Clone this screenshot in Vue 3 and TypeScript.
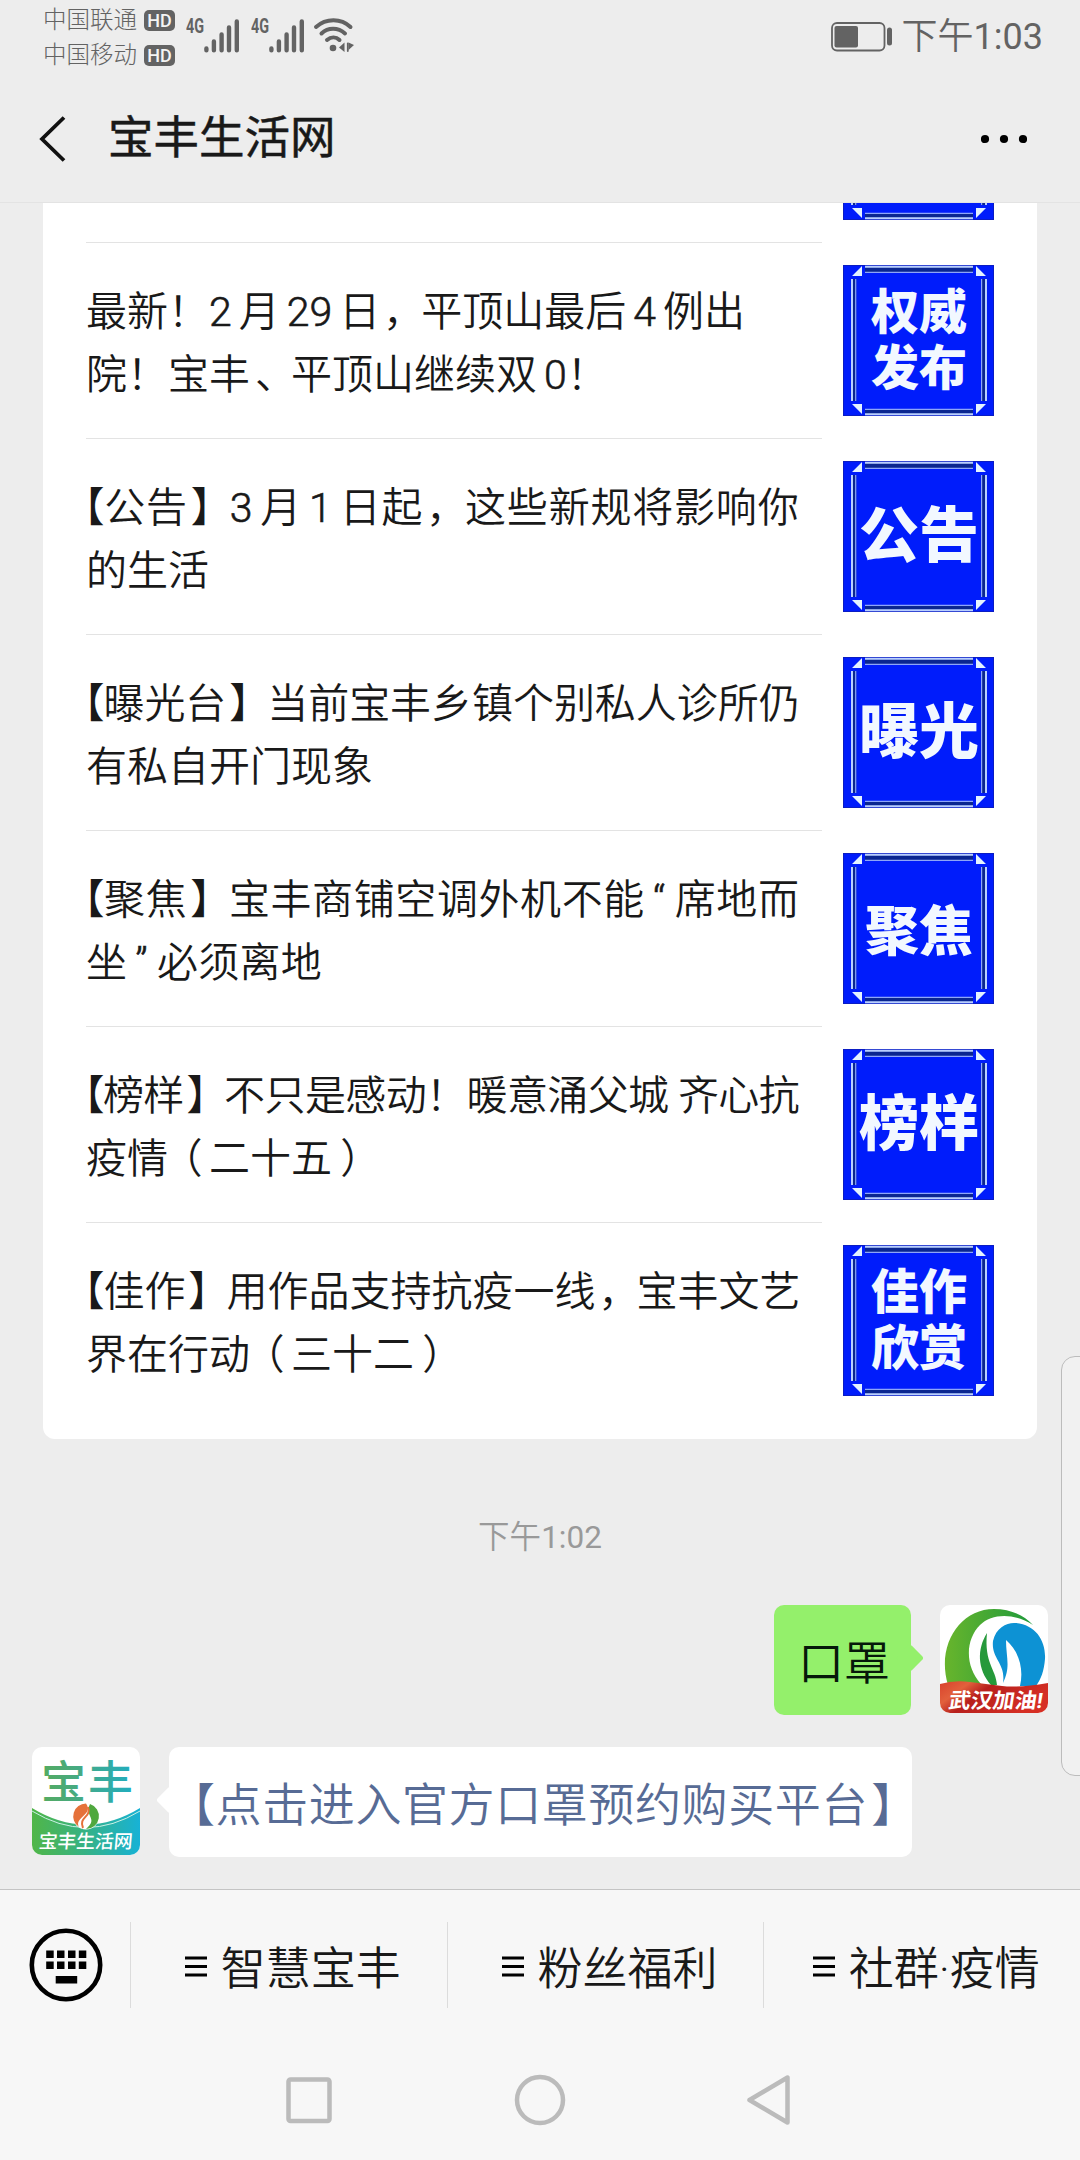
<script setup lang="ts">
interface Line { text: string; spacing: number }
interface Article { lines: Line[]; badge: string[]; size: number }
interface Token { text: string; kind: string }

const line = (text: string, spacing = 0): Line => ({ text, spacing })

const articles: Article[] = [
  { lines: [], badge: [], size: 60 },
  { lines: [line('最新！2月29日，平顶山最后4例出'), line('院！宝丰、平顶山继续双0！')], badge: ['权威', '发布'], size: 48 },
  { lines: [line('【公告】3月1日起，这些新规将影响你', 0.8), line('的生活')], badge: ['公告'], size: 60 },
  { lines: [line('【曝光台】当前宝丰乡镇个别私人诊所仍', -0.05), line('有私自开门现象')], badge: ['曝光'], size: 60 },
  { lines: [line('【聚焦】宝丰商铺空调外机不能“席地而', 0.6), line('坐”必须离地', 0.3)], badge: ['聚焦'], size: 54 },
  { lines: [line('【榜样】不只是感动！暖意涌父城 齐心抗', -0.6), line('疫情（二十五）')], badge: ['榜样'], size: 60 },
  { lines: [line('【佳作】用作品支持抗疫一线，宝丰文艺'), line('界在行动（三十二）')], badge: ['佳作', '欣赏'], size: 48 },
]

const kinds: Record<string, string> = {
  '【': 'half lb', '】': 'half rb', '（': 'half lp', '）': 'half rp', '，': 'half comma', '、': 'half pause', '“': 'latin quote', '”': 'latin quote',
}

/* Splits a title so that digits and wide punctuation get their own spacing. */
function tokens(text: string): Token[] {
  const parts = text.split(/([0-9]+|[“”【】（），、])/).filter(Boolean)
  return parts.map((p, i) => {
    if (!/^[0-9]/.test(p)) return { text: p, kind: kinds[p] ?? '' }
    const before = i > 0 ? parts[i - 1].slice(-1) : ''
    const after = i < parts.length - 1 ? parts[i + 1][0] : ''
    const wide = /[！】，、]/
    return {
      text: p,
      kind: ['latin', wide.test(before) ? '' : 'gl', wide.test(after) ? '' : 'gr'].join(' '),
    }
  })
}

const menus = ['智慧宝丰', '粉丝福利', '社群·疫情']
</script>

<template>
  <div class="screen">
    <div class="status">
      <div class="carriers">
        <div v-for="c in ['中国联通', '中国移动']" :key="c" class="carrier">
          <span>{{ c }}</span><b class="hd">HD</b>
        </div>
      </div>
      <div v-for="n in 2" :key="n" class="signal">
        <span class="g4">4G</span>
        <svg width="36" height="34" viewBox="0 0 36 34" stroke="#636363" stroke-width="4.4" stroke-linecap="round">
          <path d="M2.4 29.4V31.2M9.9 22.4V31.2M17.6 15.4V31.2M25 8.4V31.2M32.8 2.4V31.2" />
        </svg>
      </div>
      <svg class="wifi" width="42" height="36" viewBox="0 0 42 36" fill="none" stroke="#636363" stroke-width="4" stroke-linecap="round">
        <path d="M3 10C13 1 28 1 37.500 10M8.500 16.500C15 10.300 25 10.300 32 16.500M14 23C18 19.500 23 19.500 26.500 23" />
        <circle cx="20" cy="31" r="3.300" fill="#636363" stroke="none" />
        <path d="M31.500 25.500V35L26 30.500ZM35.500 25.500L41 28L35.500 33Z" fill="#636363" stroke="none" />
        <path d="M34.800 26.500V34" stroke-width="1.800" />
      </svg>
      <div class="clock">
        <svg width="62" height="30" viewBox="0 0 62 30">
          <rect x="1" y="1" width="52.500" height="27.500" rx="5" fill="none" stroke="#636363" stroke-width="1.800" />
          <rect x="3.500" y="4" width="23.500" height="21.500" rx="2" fill="#636363" />
          <rect x="56" y="5.500" width="5" height="18" rx="2.500" fill="#636363" />
        </svg>
        <span>下午<span class="num">1:03</span></span>
      </div>
    </div>

    <header class="head">
      <svg width="28" height="46" viewBox="0 0 28 46" fill="none" stroke="#111" stroke-width="3.800">
        <path d="M25 1.500L3 23L25 44.500" />
      </svg>
      <h1>宝丰生活网</h1>
      <svg class="more" width="46" height="10" viewBox="0 0 46 10">
        <circle cx="4" cy="5" r="4.100" /><circle cx="23" cy="5" r="4.100" /><circle cx="42" cy="5" r="4.100" />
      </svg>
    </header>

    <main class="feed">
      <section class="card">
        <article v-for="(a, i) in articles" :key="i" class="item">
          <div class="title">
            <div v-for="l in a.lines" :key="l.text" class="line" :style="{ letterSpacing: l.spacing + 'px' }">
              <span v-for="(t, k) in tokens(l.text)" :key="k" :class="t.kind">{{ t.text }}</span>
            </div>
          </div>
          <svg class="thumb" width="151" height="151" viewBox="0 0 151 151">
            <rect width="151" height="151" fill="#0a1cc4" />
            <rect x="1" y="1" width="149" height="149" fill="#001cfb" />
            <path d="M22 4.500H130M22 146.500H130M10.800 14V136M140.800 14V136" stroke="#0a2690" stroke-width="5" />
            <path d="M22 1.700H130M22 149.300H130M9 14V136M143 14V136" stroke="#b9cfff" stroke-width="2" />
            <path d="M22 7.300H130M22 144.300H130M12.700 14V136M138.600 14V136" stroke="#8ea6f8" stroke-width="1.200" />
            <path d="M9 11L19 1V11ZM133 1V11H143ZM9 139H19V149ZM133 139H143L133 149Z" fill="#e4f3ff" />
            <g class="badge" text-anchor="middle" fill="#f2f8ff" :font-size="a.size">
              <template v-if="a.badge.length === 2">
                <text x="76" y="63.500">{{ a.badge[0] }}</text>
                <text x="76" y="120">{{ a.badge[1] }}</text>
              </template>
              <text v-else-if="a.badge.length" x="76" :y="a.size === 54 ? 98 : 96">{{ a.badge[0] }}</text>
            </g>
          </svg>
        </article>
      </section>

      <p class="time">下午<span class="num">1:02</span></p>

      <div class="msg mine">
        <div class="bubble">口罩</div>
        <svg class="avatar" width="108" height="108" viewBox="0 0 108 108">
          <defs>
            <linearGradient id="leaf" x1="0" x2="1"><stop offset="0" stop-color="#68b52c" /><stop offset="1" stop-color="#1f9a3c" /></linearGradient>
            <linearGradient id="ribbon" x1="0" x2="1" y1="0" y2=".4"><stop offset="0" stop-color="#d8422c" /><stop offset=".25" stop-color="#e2603c" /><stop offset=".45" stop-color="#b7201d" /><stop offset="1" stop-color="#d62f24" /></linearGradient>
          </defs>
          <rect width="108" height="108" fill="#fff" />
          <path d="M8 80C-4 40 20 4 54 4C70 4 84 10 93 20C75 8 52 8 40 20C26 34 24 60 41 79Z" fill="url(#leaf)" />
          <path d="M47 28C37 44 37 64 51 80H57C56 64 44 58 47 28Z" fill="#26993b" />
          <path d="M53 36C56 22 68 17 76 18C96 20 106 36 105 54C104 66 101 74 96 81L80 81C84 64 79 46 66 35C66 52 71 62 63 78C66 58 51 54 53 36Z" fill="#0d92d4" />
          <path d="M0 79Q14 75 30 77T62 81T108 78V108H0Z" fill="url(#ribbon)" />
          <text x="54" y="103" text-anchor="middle" font-size="21" font-weight="700" fill="#fff" transform="translate(17 0) skewX(-9)" textLength="94" lengthAdjust="spacingAndGlyphs">武汉加油!</text>
        </svg>
      </div>

      <div class="msg theirs">
        <svg class="avatar" width="108" height="108" viewBox="0 0 108 108">
          <defs>
            <linearGradient id="name" x1="10" x2="98" y1="0" y2="0" gradientUnits="userSpaceOnUse"><stop offset="0" stop-color="#55ab60" /><stop offset=".5" stop-color="#42aa8b" /><stop offset="1" stop-color="#22adbc" /></linearGradient>
            <linearGradient id="base" x1="0" x2="1"><stop offset="0" stop-color="#50b648" /><stop offset=".5" stop-color="#36b286" /><stop offset="1" stop-color="#17b2d6" /></linearGradient>
          </defs>
          <rect width="108" height="108" fill="#fff" />
          <text x="9" y="51.500" font-size="45" font-weight="500" fill="url(#name)" textLength="92" lengthAdjust="spacing">宝丰</text>
          <path d="M0 61Q54 94 108 61V108H0Z" fill="url(#base)" />
          <path d="M0 64Q54 97 108 64" fill="none" stroke="#c9f0e4" stroke-width="1" />
          <circle cx="54" cy="69" r="13.500" fill="#fff" />
          <path d="M54 56.500A12.800 12.800 0 0 0 47 80C42 70 62 68 54 56.500Z" fill="#e5713a" />
          <path d="M58 57A12.800 12.800 0 0 1 54 82C67 71 52 70 58 57Z" fill="#4fa83e" />
          <path d="M51 81C46 70 60 70 56 60" fill="none" stroke="#e5713a" stroke-width="2" />
          <text x="54" y="101" text-anchor="middle" font-size="18.800" font-weight="500" fill="#fff" transform="translate(8 0) skewX(-5)">宝丰生活网</text>
        </svg>
        <div class="bubble"><a><span class="half lb">【</span>点击进入官方口罩预约购买平台<span class="half rb">】</span></a></div>
      </div>
    </main>

    <div class="handle"></div>

    <footer class="foot">
      <div class="menubar">
        <div class="kbd">
          <svg width="74" height="74" viewBox="0 0 74 74">
            <circle cx="37" cy="37" r="34.200" fill="none" stroke="#000" stroke-width="4.600" />
            <path d="M17.200 22.500h7.500v7.500h-7.500zM28 22.500h7.500v7.500h-7.500zM39 22.500h7.500v7.500h-7.500zM49.800 22.500h7.500v7.500h-7.500zM17.200 33.500h7.500v7.500h-7.500zM28 33.500h7.500v7.500h-7.500zM39 33.500h7.500v7.500h-7.500zM49.800 33.500h7.500v7.500h-7.500zM26.700 48h21.500v7.500h-21.500z" />
          </svg>
        </div>
        <div v-for="m in menus" :key="m" class="menu">
          <svg width="22" height="22" viewBox="0 0 22 22"><path d="M0 .500H22V3.500H0ZM0 9H22V12H0ZM0 17.500H22V20.500H0Z" /></svg>
          <span>{{ m }}</span>
        </div>
      </div>
      <nav class="nav">
        <svg width="52" height="52" viewBox="0 0 52 52"><rect x="5.500" y="5.500" width="41" height="41.500" rx="2" /></svg>
        <svg width="52" height="52" viewBox="0 0 52 52"><circle cx="26" cy="26" r="23" /></svg>
        <svg width="52" height="52" viewBox="0 0 52 52"><path d="M4.500 26L42.500 3.500V48.500Z" stroke-linejoin="round" /></svg>
      </nav>
    </footer>
  </div>
</template>

<style>
body { margin: 0; background: #ededed; }
</style>

<style scoped>
.screen {
  position: relative;
  width: 1080px;
  height: 2160px;
  overflow: hidden;
  display: flex;
  flex-direction: column;
  background: #ededed;
  color: #191919;
  font-family: Roboto, "Noto Sans CJK SC", sans-serif;
  font-weight: 350;
  text-autospace: no-autospace;
  text-spacing-trim: space-all;
}
.screen svg { display: block; flex: none; }
.status { height: 76px; flex: none; display: flex; align-items: flex-start; padding: 0 37px 0 43px; box-sizing: border-box; color: #636363; }
.carriers { width: 143px; padding-top: 3px; }
.carrier { display: flex; align-items: center; height: 35px; font-size: 23.500px; line-height: 35px; font-weight: 300; }
.hd { margin-left: 7px; width: 31px; height: 21px; border-radius: 5px; background: #636363; color: #f4f4f4; font: 500 18px/21.500px Roboto, sans-serif; text-align: center; }
.signal { display: flex; width: 65px; padding-top: 19px; }
.g4 { width: 18px; font: 700 20px/15px Roboto, sans-serif; transform: scaleX(.72); transform-origin: 0 0; white-space: nowrap; }
.wifi { margin: 17px 0 0 -3px; }
.clock { margin-left: auto; display: flex; align-items: flex-start; gap: 9px; font-size: 36px; line-height: 54px; }
.clock > span { padding-top: 10px; }
.clock svg { margin-top: 22px; }
.num { font-weight: 400; }
.head { height: 126px; flex: none; display: flex; align-items: center; padding: 0 53px 0 39px; box-sizing: border-box; }
.head h1 { margin: 0 0 0 41px; font-size: 45.500px; font-weight: 400; line-height: 60px; -webkit-text-stroke: .5px #191919; }
.more { margin-left: auto; }
.feed { height: 1687px; flex: none; overflow: hidden; border-top: 1px solid #e3e3e3; box-sizing: border-box; }
.card { margin: -157px 43px 0; height: 1393px; background: #fff; border-radius: 12px; }
.item { height: 196px; box-sizing: border-box; padding: 23px 43px 0 43px; display: flex; justify-content: space-between; position: relative; }
.item + .item::before { content: ""; position: absolute; left: 43px; right: 215px; top: 0; height: 1px; background: #e3e3e3; }
.title { padding-top: 16px; }
.line { height: 63px; line-height: 63px; font-size: 41px; white-space: pre; }
.latin { -webkit-text-stroke: .6px #191919; }
.gl { margin-left: 7px; }
.gr { margin-right: 7px; }
.quote { margin: 0 9px 0 8px; }
.half { font-feature-settings: "halt"; }
.lb { margin-left: .5em; }
.line .lb { margin: 0 -1px 0 -2px; }
.rb { margin: 0 .43em 0 .07em; }
.lp { margin: 0 .16em 0 .34em; }
.rp { margin-left: .2em; }
.comma { margin: 0 .43em 0 .07em; }
.pause { margin: 0 .38em 0 .12em; }
.badge { font-weight: 900; }
.time { margin: 79px 0 0; height: 40px; line-height: 40px; font-size: 31.500px; text-align: center; color: #999; }
.msg { display: flex; align-items: flex-start; }
.avatar { border-radius: 10px; overflow: hidden; }
.bubble { position: relative; height: 110px; line-height: 116px; border-radius: 10px; box-sizing: border-box; font-size: 46px; white-space: nowrap; }
.bubble::after { content: ""; position: absolute; width: 20px; height: 20px; top: 43px; border-radius: 3px; transform: rotate(45deg); }
.mine { justify-content: flex-end; padding: 47px 32px 0 0; gap: 29px; }
.mine .bubble { width: 137px; padding-left: 24px; background: #94f06b; color: #06180a; }
.mine .bubble::after { right: -9px; background: #94f06b; }
.theirs { padding: 32px 0 0 32px; gap: 29px; }
.theirs .bubble { width: 743px; background: #fff; color: #576b95; letter-spacing: .6px; }
.theirs .bubble::after { left: -9px; background: #fff; }
.handle { position: absolute; left: 1061px; top: 1356px; width: 40px; height: 420px; box-sizing: border-box; border: 1.500px solid #bcbcbc; border-radius: 14px; background: #f1f1f1; }
.foot { flex: 1; background: #f7f7f7; border-top: 1px solid #c4c4c4; }
.menubar { display: flex; align-items: center; height: 150px; }
.kbd { width: 130px; padding-left: 28.500px; box-sizing: border-box; }
.menu { flex: 1; height: 86px; display: flex; align-items: center; justify-content: center; gap: 14px; border-left: 1px solid #dcdcdc; padding-left: 8px; box-sizing: border-box; font-size: 45px; white-space: nowrap; }
.menu svg { margin-top: 4px; }
.nav { display: flex; justify-content: center; gap: 179px; padding-top: 34px; }
.nav svg { fill: none; stroke: #bbb; stroke-width: 4.500; }
</style>
